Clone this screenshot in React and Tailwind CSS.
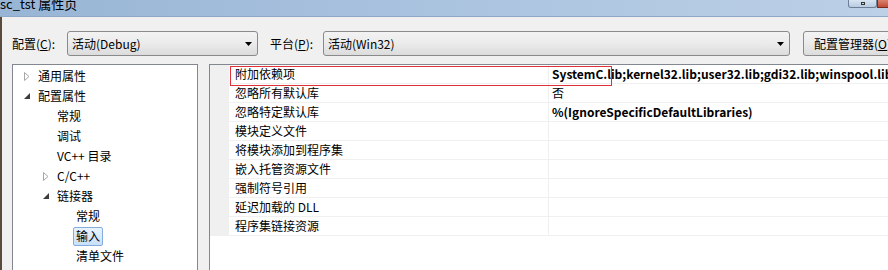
import React from 'react';

const font = { fontFamily: '"Noto Sans CJK SC", "Noto Sans", sans-serif' };

const treeItems = [
  { label: '通用属性', level: 0, exp: 'closed' },
  { label: '配置属性', level: 0, exp: 'open' },
  { label: '常规', level: 1 },
  { label: '调试', level: 1 },
  { label: 'VC++ 目录', level: 1 },
  { label: 'C/C++', level: 1, exp: 'closed' },
  { label: '链接器', level: 1, exp: 'open' },
  { label: '常规', level: 2 },
  { label: '输入', level: 2, selected: true },
  { label: '清单文件', level: 2 },
];

const props = [
  ['附加依赖项', 'SystemC.lib;kernel32.lib;user32.lib;gdi32.lib;winspool.lib;comdlg32.lib', true],
  ['忽略所有默认库', '否', false],
  ['忽略特定默认库', '%(IgnoreSpecificDefaultLibraries)', true],
  ['模块定义文件', ''],
  ['将模块添加到程序集', ''],
  ['嵌入托管资源文件', ''],
  ['强制符号引用', ''],
  ['延迟加载的 DLL', ''],
  ['程序集链接资源', ''],
];

const Expander = ({ type }) => {
  if (type === 'closed')
    return (
      <svg width="6" height="9" viewBox="0 0 6 9" className="shrink-0">
        <path d="M0.5 0.5 L5 4.5 L0.5 8.5 Z" fill="none" stroke="#a6a6a6" strokeWidth="1" />
      </svg>
    );
  return (
    <svg width="6" height="6" viewBox="0 0 6 6" className="shrink-0">
      <path d="M6 0 L6 6 L0 6 Z" fill="#3c3c3c" />
    </svg>
  );
};

const Arrow = () => (
  <svg width="7" height="4" viewBox="0 0 7 4">
    <path d="M0 0 L7 0 L3.5 4 Z" fill="#000" />
  </svg>
);

const Combo = ({ className, text }) => (
  <div className={`h-[25px] shrink-0 flex items-center justify-between pl-[4px] pr-[5px] border border-[#8a8a8a] rounded-[3px] bg-gradient-to-b from-[#f3f3f3] via-[#ebebeb] to-[#dcdcdc] ${className}`}>
    <span className="text-[12px] text-black leading-none">{text}</span>
    <Arrow />
  </div>
);

export default function App() {
  return (
    <div className="w-[888px] h-[270px] overflow-hidden bg-[#f0f0f0] flex flex-col relative" style={font}>
      {/* title bar */}
      <div className="h-[17px] shrink-0 bg-gradient-to-r from-[#98b5d5] via-[#aac3df] to-[#bcd0e6] border-b border-[#8ea9c8] flex items-start relative">
        <span className="text-[13px] leading-none text-black -mt-[3px] whitespace-nowrap">sc_tst 属性页</span>
        <div className="absolute left-[848px] top-0 w-[29px] h-[8px] border border-t-0 border-[#6d7f96] rounded-b-[3px] bg-gradient-to-b from-[#d8e4f1] to-[#b9cce2] flex justify-center">
          <div className="w-[4px] h-[3px] border border-[#333] mt-[2px]" />
        </div>
        <div className="absolute left-[877px] top-0 w-[20px] h-[8px] bg-gradient-to-b from-[#d98370] to-[#c24a32] border border-t-0 border-[#7a2c20]" />
      </div>

      <div className="flex-1 flex flex-col border-l-2 border-[#5a4a3e] min-h-0">
        {/* config row */}
        <div className="flex items-center h-[25px] mt-[14px]">
          <span className="ml-[10px] w-[55px] shrink-0 text-[12px] text-black">配置(<span className="underline">C</span>):</span>
          <Combo className="w-[191px]" text="活动(Debug)" />
          <span className="ml-[12px] w-[53px] shrink-0 text-[12px] text-black">平台(<span className="underline">P</span>):</span>
          <Combo className="w-[467px]" text="活动(Win32)" />
          <div className="ml-[13px] h-[25px] w-[100px] shrink-0 border border-[#8a8a8a] rounded-[3px] bg-gradient-to-b from-[#f3f3f3] via-[#ebebeb] to-[#dcdcdc] flex items-center pl-[10px]">
            <span className="text-[12px] text-black whitespace-nowrap">配置管理器(<span className="underline">O</span>)</span>
          </div>
        </div>

        {/* main area */}
        <div className="flex flex-1 mt-[8px] min-h-0">
          <div className="ml-[10px] w-[186px] shrink-0 bg-white border border-b-0 border-[#828790] pt-[1px]">
            {treeItems.map((it, i) => (
              <div key={i} className="h-[20px] flex items-center" style={{ paddingLeft: 11 + it.level * 19 }}>
                <div className="w-[14px] flex items-center">{it.exp && <Expander type={it.exp} />}</div>
                <span
                  className={`text-[12px] text-black whitespace-nowrap leading-none ${
                    it.selected
                      ? '-ml-[3px] px-[2px] h-[19px] flex items-center rounded-[2px] border border-[#84acdd] bg-gradient-to-b from-[#eaf3fd] to-[#c7e0fa]'
                      : ''
                  }`}
                >
                  {it.label}
                </span>
              </div>
            ))}
          </div>

          <div className="ml-[11px] flex-1 min-w-0 bg-white border-l border-t border-[#828790] flex flex-col relative">
            {props.map(([k, v, bold], i) => (
              <div key={i} className="flex h-[19px] border-b border-[#f0f0f0]">
                <div className="w-[19px] shrink-0 bg-[#f0f0f0]" />
                <div className="w-[320px] shrink-0 flex items-center pl-[6px] border-r border-[#f0f0f0]">
                  <span className="text-[12px] text-black leading-none">{k}</span>
                </div>
                <div className="flex-1 min-w-0 flex items-center pl-[3px] overflow-hidden">
                  <span className={`text-[12px] text-black leading-none whitespace-nowrap ${bold ? 'font-bold' : ''}`}>{v}</span>
                </div>
              </div>
            ))}
            <div className="absolute left-[20px] top-[1px] w-[382px] h-[20px] border border-[#e0303a] pointer-events-none" />
          </div>
        </div>
      </div>
    </div>
  );
}
